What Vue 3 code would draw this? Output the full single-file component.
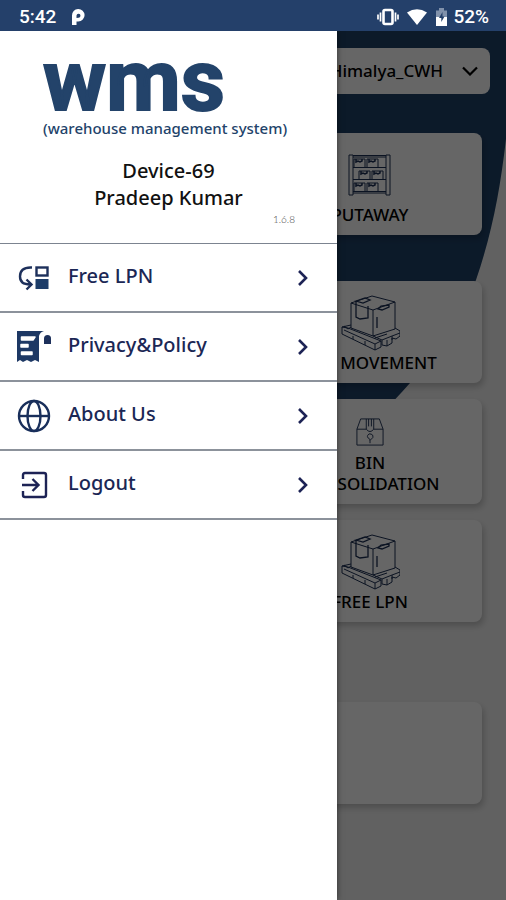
<script setup>
import { ref } from 'vue'

const site = ref('Himalya_CWH')
const menu = [
  { label: 'Free LPN', icon: 'swap' },
  { label: 'Privacy&Policy', icon: 'policy' },
  { label: 'About Us', icon: 'globe' },
  { label: 'Logout', icon: 'logout' },
]
const tiles = [
  { label: 'PUTAWAY', icon: 'rack', space: 'wide' },
  { label: 'LPN MOVEMENT', icon: 'pallet', space: '' },
  { label: 'BIN CONSOLIDATION', icon: 'bin', space: 'tall' },
  { label: 'FREE LPN', icon: 'pallet', space: 'section' },
  { label: '', icon: '', space: '' },
]
</script>

<template>
  <div class="app">
    <header class="status">
      <span class="clock">5:42</span>
      <svg class="parking" viewBox="0 0 14 18" width="14" height="18" aria-hidden="true">
        <path d="M1 17V7.500A6.300 6.300 0 1 1 7.300 13.500H5.500V17z" fill="#fff" />
        <path d="M5.500 10V7.500a2 2 0 1 1 2 2.200z" fill="#24406a" />
      </svg>
      <span class="spacer"></span>
      <svg viewBox="0 0 22 18" width="22" height="18" aria-hidden="true">
        <rect x="6.500" y="2" width="9" height="14" rx="1.500" fill="none" stroke="#fff" stroke-width="2.600" />
        <path d="M3.500 4.500v9M1 6.500v5M18.500 4.500v9M21 6.500v5" stroke="#fff" stroke-width="1.700" />
      </svg>
      <svg class="wifi" viewBox="0 0 20 16" width="20" height="16" aria-hidden="true">
        <path d="M0 3.500Q10-3 20 3.500L10 16z" fill="#fff" />
      </svg>
      <svg class="battery" viewBox="0 0 11 18" width="11" height="18" aria-hidden="true">
        <path d="M0 2.500h3V0h5v2.500h3V9H0z" fill="#8192ab" />
        <path d="M0 9h11v9H0z" fill="#fff" />
        <path d="M6.500 4L3 10h2.300v4L8.500 8.500H6.500z" fill="#24406a" />
      </svg>
      <span class="percent">52%</span>
    </header>

    <div class="screen">
      <main class="home">
        <svg class="backdrop" viewBox="0 0 506 500" preserveAspectRatio="none" aria-hidden="true">
          <path d="M0 0H506V108C500 160 492 202 476 249C460 288 438 320 410 352C370 398 320 440 260 460H0z" fill="#204268" />
        </svg>
        <div class="site">
          <select v-model="site" aria-label="Warehouse">
            <option>Himalya_CWH</option>
          </select>
          <svg class="caret" viewBox="0 0 16 10" width="16" height="10" aria-hidden="true">
            <path d="M1 1.500l7 7 7-7" fill="none" stroke="#000" stroke-width="2.200" />
          </svg>
        </div>
        <div class="tiles">
          <section v-for="(tile, i) in tiles" :key="i" class="tile" :class="tile.space">
            <svg v-if="tile.icon === 'rack'" viewBox="1 0 44 42" width="44" height="42" class="line" aria-hidden="true">
              <path d="M2 1h4v40H2zM39 1h4v40h-4zM6 1.500h33M6 3h33M6 13.500h33M6 25.500h33M6 37.500h33M6 39h33" />
              <path d="M7 13V5h11v8M20 13V5h11v8M12 25v-8h11v8M25 25v-8h11v8M7 37v-8h11v8M20 37v-8h11v8" />
              <path d="M9 5v3l2-1 2 1 2-1V5M22 5v3l2-1 2 1 2-1V5M14 17v3l2-1 2 1 2-1v-2M27 17v3l2-1 2 1 2-1v-2M9 29v3l2-1 2 1 2-1v-2M22 29v3l2-1 2 1 2-1v-2" stroke-width="1.500" />
            </svg>
            <svg v-else-if="tile.icon === 'pallet'" viewBox="-2 0 60 58" width="60" height="58" class="line" aria-hidden="true">
              <path d="M9 9L30 2l23 6-22 8zM9 9v25l22 8 22-7V8M31 16v26" />
              <path d="M14 7v16l4 2 8-1V12M14 7l9-3 5 2-7 3zM36 15l3-3 8-1v2l-7 3zM35 23v11" stroke-width="1.300" />
              <path d="M9 31l-9 2v7l33 16 6-3v-6L6 34l-6-1M2 36l31 14 6-3M33 50v6M11 42v3M23 47v4M31 42l9 4v5l5 1 5-3v-5l4 1 4-3v-5l-5-3M40 46l10-4 8-3M45 46v6M50 42v4M2 32l4 3 3-2M33 44l12-4" />
            </svg>
            <svg v-else-if="tile.icon === 'bin'" viewBox="0 0 30 30" width="28" height="28" class="line" aria-hidden="true">
              <path d="M1 12L5 1h20l4 11v17H1zM1 12h10M19 12h10M11 1v11q4 5 8 0V1M13.500 1v8M16.500 1v8" />
              <path d="M15 27v-4q-5-3-1-6 5 0 4 4l-3 3" />
            </svg>
            <h2 v-if="tile.label">{{ tile.label }}</h2>
          </section>
        </div>
      </main>
      <div class="scrim"></div>

      <aside class="drawer">
        <div class="brand">
          <div class="wordmark">wms</div>
          <div class="tagline">(warehouse management system)</div>
        </div>
        <div class="user">
          <div>Device-69</div>
          <div>Pradeep Kumar</div>
        </div>
        <div class="version">1.6.8</div>
        <nav>
          <a v-for="item in menu" :key="item.label" href="#" class="item">
            <svg v-if="item.icon === 'swap'" viewBox="0 0 32 32" width="32" height="32" aria-hidden="true">
              <path d="M14 5.500C5 5 2 9 2 14.500C2 20 5 22.500 12 22.500M8.500 17.500l5 5-5 5" fill="none" stroke="#1d305b" stroke-width="2.400" />
              <rect x="18.500" y="5.500" width="11" height="8" fill="none" stroke="#1d305b" stroke-width="2.400" />
              <rect x="17.500" y="17" width="13" height="10" fill="#1d3d69" />
            </svg>
            <svg v-else-if="item.icon === 'policy'" viewBox="0 0 34 34" width="34" height="34" aria-hidden="true">
              <path d="M0 1h27q-4 1-5 5v26l-4-2-4 2-4-2-4 2-3-2-3 2z" fill="#1d3864" />
              <path d="M4.500 7H18l-2 3H4.500zM4 14.500h7v2.500H4zM4.500 22H15v2.500H4.500z" fill="#fff" stroke="#fff" stroke-width="1.500" stroke-linejoin="round" />
              <path d="M27 14V8.500q0-3.500 3.500-3.500T34 8.500V14z" fill="#1d305b" />
            </svg>
            <svg v-else-if="item.icon === 'globe'" viewBox="0 0 34 34" width="34" height="34" fill="none" stroke="#192f5b" stroke-width="2.400" aria-hidden="true">
              <circle cx="17" cy="17" r="15" />
              <ellipse cx="17" cy="17" rx="6.500" ry="15" />
              <path d="M2 17h30" />
            </svg>
            <svg v-else viewBox="0 0 34 34" width="34" height="34" fill="none" stroke="#1d2355" stroke-width="2.400" aria-hidden="true">
              <path d="M6 11V7q0-2 2-2h19q2 0 2 2v20q0 2-2 2H8q-2 0-2-2v-4M5 17h16.500M15.500 11l6 6-6 6" />
            </svg>
            <span class="label">{{ item.label }}</span>
            <svg class="chevron" viewBox="0 0 10 16" width="10" height="16" aria-hidden="true">
              <path d="M1 1l7 7-7 7" fill="none" stroke="#1d2355" stroke-width="2.600" />
            </svg>
          </a>
        </nav>
      </aside>
    </div>
  </div>
</template>

<style>
body {
  margin: 0;
  background: #616161;
}
</style>

<style scoped>
.app {
  display: flex;
  flex-direction: column;
  min-height: 100vh;
  font-family: "Noto Sans", "Open Sans", sans-serif;
}
.status {
  display: flex;
  align-items: center;
  height: 31px;
  padding: 2px 17px 0 19px;
  box-sizing: border-box;
  background: #24406a;
  color: #fff;
  font: 500 19px/24px Roboto, sans-serif;
}
.parking {
  margin-left: 15px;
}
.spacer {
  flex: 1;
}
.wifi {
  margin-left: 8px;
}
.battery {
  margin: 0 6px 0 9px;
}
.screen {
  position: relative;
  flex: 1;
  display: flex;
  overflow: hidden;
}
.home {
  position: relative;
  flex: 1;
  background: #f3f3f3;
}
.backdrop {
  position: absolute;
  top: 0;
  left: 0;
  width: 100%;
  height: 500px;
}
.site {
  position: relative;
  margin: 17px 16px 39px;
}
.site select {
  display: block;
  width: 100%;
  height: 46px;
  padding: 0 47px 0 16px;
  border: 0;
  border-radius: 8px;
  background: #fff;
  color: #000;
  font: 500 17px/24px "Noto Sans", sans-serif;
  text-align-last: right;
  appearance: none;
}
.caret {
  position: absolute;
  right: 12px;
  top: 18px;
  pointer-events: none;
}
.tiles {
  position: relative;
  display: grid;
  grid-template-columns: 1fr 1fr;
  column-gap: 10px;
  padding: 0 24px 24px;
}
.tile {
  grid-column: 2;
  display: flex;
  flex-direction: column;
  align-items: center;
  justify-content: flex-end;
  min-height: 102px;
  margin-bottom: 16px;
  padding: 8px 32px 10px;
  box-sizing: border-box;
  border-radius: 8px;
  background: #fff;
  box-shadow: 2px 4px 6px rgba(0, 0, 0, 0.2);
}
.tile.wide {
  margin-bottom: 46px;
}
.tile.tall {
  min-height: 105px;
}
.tile.section {
  margin-bottom: 80px;
}
.tile h2 {
  margin: 0;
  color: #000;
  font-size: 17px;
  font-weight: 500;
  line-height: 21px;
  text-align: center;
}
.tile.wide h2 {
  margin-top: 8px;
}
.tile.tall h2 {
  margin-top: 6px;
}
.line {
  flex: none;
  fill: none;
  stroke: #1d3055;
  stroke-width: 1;
}
.scrim {
  position: absolute;
  inset: 0;
  background: rgba(0, 0, 0, 0.6);
}
.drawer {
  position: absolute;
  top: 0;
  bottom: 0;
  left: 0;
  width: 66.6%;
  background: #fff;
  box-shadow: 0 0 6px rgba(0, 0, 0, 0.5);
}
.brand {
  padding: 14px 0 0 43px;
  color: #23436a;
}
.wordmark {
  font: 700 86px/72px Roboto, sans-serif;
  -webkit-text-stroke: 2px #23436a;
}
.tagline {
  font-size: 15px;
  font-weight: 500;
  line-height: 22px;
  white-space: nowrap;
}
.user {
  padding-top: 18px;
  color: #111;
  font-size: 20px;
  font-weight: 500;
  line-height: 27px;
  text-align: center;
}
.version {
  padding: 1px 42px 17px 0;
  color: #444;
  font: 300 10px/14px Lato, sans-serif;
  text-align: right;
}
nav {
  border-top: 1px solid #7c8490;
}
.item {
  display: flex;
  align-items: center;
  height: 69px;
  padding: 0 29px 0 17px;
  box-sizing: border-box;
  border-bottom: 2px solid #8c929b;
  color: #1b2755;
  font-size: 20px;
  font-weight: 500;
  line-height: 28px;
  text-decoration: none;
}
.item svg:first-child {
  flex: none;
  width: 34px;
}
.label {
  flex: 1;
  margin: 0 0 3px 17px;
}
</style>
